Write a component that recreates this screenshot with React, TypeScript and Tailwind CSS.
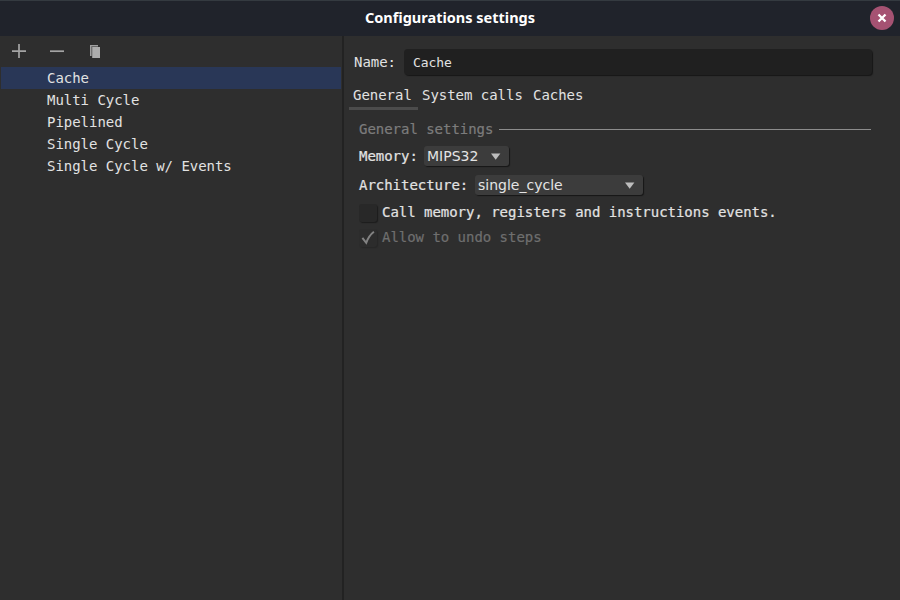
import type { ReactNode } from 'react';

const configurations = ['Cache', 'Multi Cycle', 'Pipelined', 'Single Cycle', 'Single Cycle w/ Events'];

function Select({ value, className }: { value: string; className: string }) {
  return (
    <div
      className={`flex h-5 items-center justify-between rounded-[3px] bg-[#3c3c3c] pl-[3px] pr-2 font-['DejaVu_Sans',sans-serif] text-[14px] leading-5 tracking-normal text-[#e4e4e4] shadow-[1px_1px_1px_0px_#171717] [-webkit-text-stroke:0px] ${className}`}
    >
      <span>{value}</span>
      <svg width="10" height="7" viewBox="0 0 10 7" className="mt-px">
        <path d="M0 0.4H9.4L4.7 6.8Z" fill="#bdbdbd" />
      </svg>
    </div>
  );
}

function Tab({ children, active = false, className }: { children: ReactNode; active?: boolean; className: string }) {
  return (
    <div className={`h-[27px] border-b-[3px] leading-[24px] ${active ? 'border-[#4c4c4c]' : 'border-transparent'} ${className}`}>
      {children}
    </div>
  );
}

function TitleBar() {
  return (
    <header className="flex h-9 shrink-0 items-center border-t border-[#343a40] bg-[#20232b] pb-px pr-[6px]">
      <h1 className="w-[900px] pl-[30px] text-center font-['Noto_Sans',sans-serif] text-[14.5px] font-bold tracking-normal text-white">
        Configurations settings
      </h1>
      <div className="flex size-6 shrink-0 items-center justify-center rounded-full bg-[#a55272]">
        <svg width="10" height="10" viewBox="0 0 10 10">
          <path d="M1.5 1.5L8.5 8.5M8.5 1.5L1.5 8.5" stroke="#fff" strokeWidth="2.3" />
        </svg>
      </div>
    </header>
  );
}

function Sidebar() {
  return (
    <aside className="w-[342px] shrink-0 pl-px pr-px">
      <div className="flex h-[31px] pl-[11px] pt-2">
        <svg width="14" height="14" viewBox="0 0 14 14">
          <path d="M0 7.2H14M7 0V14" stroke="#a4a4a4" strokeWidth="1.7" />
        </svg>
        <svg width="14" height="14" viewBox="0 0 14 14" className="ml-6">
          <path d="M0 7.2H14" stroke="#a4a4a4" strokeWidth="1.7" />
        </svg>
        <svg width="12" height="14" viewBox="0 0 12 14" className="ml-[25px]">
          <path d="M1 1H9V2.3H2.6V12H1Z" fill="#a0a0a0" />
          <path d="M2.6 2.3H9V3H3.2V12H2.6Z" fill="#707070" />
          <path d="M3.2 3H11V14H3.2Z" fill="#adadad" />
        </svg>
      </div>
      <ul>
        {configurations.map((name, i) => (
          <li key={name} className={`h-[22px] pl-[46px] leading-[22px] ${i === 0 ? 'bg-[#293757]' : ''}`}>
            {name}
          </li>
        ))}
      </ul>
    </aside>
  );
}

export default function App() {
  return (
    <div className="flex h-[600px] w-[900px] flex-col overflow-hidden whitespace-pre bg-[#2e2e2e] font-['DejaVu_Sans_Mono',monospace] text-[14px] tracking-[-0.03px] text-[#e2e2e2]">
      <TitleBar />
      <div className="flex min-h-0 flex-1">
        <Sidebar />
        <div className="w-0.5 shrink-0 bg-[#222222]" />
        <main className="min-w-0 flex-1 pl-[5px] pr-7 pt-[13px]">
          <div className="flex h-[26px] items-center pl-[5px]">
            <label className="w-[50px]">Name:</label>
            <div className="h-[26px] w-[469px] rounded-[4px] bg-[#202020] pl-[9px] text-[13px] leading-[27px] shadow-[1px_1px_1px_0px_#171717]">
              Cache
            </div>
          </div>
          <nav className="mt-[8px] flex">
            <Tab active className="w-[69px] pl-1">General</Tab>
            <Tab className="w-[111px] pl-1">System calls</Tab>
            <Tab className="pl-1">Caches</Tab>
          </nav>
          <section className="pl-[10px] [-webkit-text-stroke:0.2px]">
            <div className="mt-[9px] flex h-5 items-center text-[#7c7c7c]">
              <span className="w-[140px]">General settings</span>
              <div className="h-px w-[372px] bg-[#8c8c8c]" />
            </div>
            <div className="mt-[7px] flex h-5 items-center">
              <span className="w-[65px]">Memory:</span>
              <Select value="MIPS32" className="w-[85px]" />
            </div>
            <div className="mt-[9px] flex h-5 items-center">
              <span className="w-[116px]">Architecture:</span>
              <Select value="single_cycle" className="w-[168px]" />
            </div>
            <div className="mt-[9px] flex h-[18px] items-center">
              <div className="mr-[5px] size-[18px] rounded-[3px] bg-[#282828] shadow-[1px_1px_1px_0px_#1c1c1c]" />
              <span className="-mt-px">Call memory, registers and instructions events.</span>
            </div>
            <div className="mt-[7px] flex h-[18px] items-center text-[#6f6f6f]">
              <div className="mr-[5px] flex size-[18px] items-center justify-center rounded-[3px] bg-[#2c2c2c] shadow-[1px_1px_1px_0px_#272727]">
                <svg width="14" height="14" viewBox="0 0 14 14">
                  <path d="M1.4 6.8L5.2 11.8C6.8 7.6 9.5 3.4 12.9 0.8" fill="none" stroke="#828282" strokeWidth="2" />
                </svg>
              </div>
              <span className="-mt-px">Allow to undo steps</span>
            </div>
          </section>
        </main>
      </div>
    </div>
  );
}
